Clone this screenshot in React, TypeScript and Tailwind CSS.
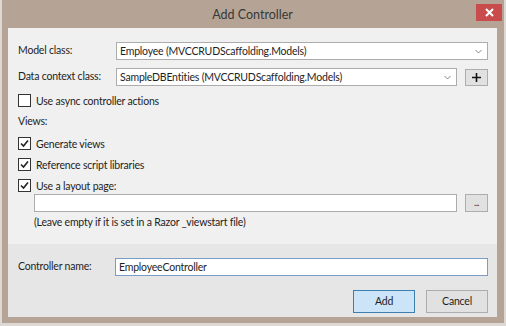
import React from "react";

const font = { fontFamily: 'Lato, "Noto Sans", sans-serif' };

function Chevron() {
  return (
    <svg width="7" height="5" viewBox="0 0 7 5" className="shrink-0">
      <polyline points="0.5,1 3.5,4 6.5,1" fill="none" stroke="#8a8a8a" strokeWidth="1" />
    </svg>
  );
}

function Check({ checked, label }: { checked: boolean; label: string }) {
  return (
    <div className="flex items-center h-[13px]">
      <div className="w-[13px] h-[13px] border border-[#333333] bg-white flex items-center justify-center shrink-0">
        {checked && (
          <svg width="11" height="11" viewBox="0 0 11 11">
            <polyline points="2,5.5 4.5,8 9,2.5" fill="none" stroke="#222" strokeWidth="1.6" />
          </svg>
        )}
      </div>
      <span className="ml-[5px] leading-[16px]">{label}</span>
    </div>
  );
}

export default function App() {
  return (
    <div className="w-[506px] h-[326px] bg-[#ddd8d3] pl-[2px] pr-[2px] pb-[3px] flex" style={font}>
      <div className="flex-1 bg-[#b5a496] flex flex-col pl-[6px] pr-[7px] pb-[6px]">
        <div className="h-[28px] relative flex items-center justify-center">
          <span className="text-[12.5px] text-[#383838] leading-none mt-[2px]">Add Controller</span>
          <div className="absolute right-[-5px] top-[4px] w-[26px] h-[17px] bg-[#c94c4c] flex items-center justify-center">
            <svg width="9" height="9" viewBox="0 0 9 9">
              <path d="M1 1 L8 8 M8 1 L1 8" stroke="white" strokeWidth="2" />
            </svg>
          </div>
        </div>
        <div className="flex-1 bg-[#f0f0f0] flex flex-col text-[10.5px] tracking-[-0.2px] text-[#1e1e1e]">
          <div className="h-[216px] pt-[14px] pl-[10px] pr-[9px] flex flex-col">
            <div className="flex items-center h-[18px]">
              <span className="w-[98px] shrink-0">Model class:</span>
              <div className="flex-1 h-[18px] bg-white border border-[#acacac] flex items-center pl-[3px] pr-[5px]">
                <span className="flex-1 leading-none">Employee (MVCCRUDScaffolding.Models)</span>
                <Chevron />
              </div>
            </div>
            <div className="flex items-center h-[18px] mt-[8px]">
              <span className="w-[98px] shrink-0">Data context class:</span>
              <div className="flex-1 h-[18px] bg-white border border-[#acacac] flex items-center pl-[3px] pr-[5px]">
                <span className="flex-1 leading-none">SampleDBEntities (MVCCRUDScaffolding.Models)</span>
                <Chevron />
              </div>
              <div className="ml-[8px] w-[23px] h-[17px] bg-[#e1e1e1] border border-[#adadad] flex items-center justify-center">
                <svg width="11" height="11" viewBox="0 0 11 11">
                  <path d="M5.5 1 V10 M1 5.5 H10" stroke="#111" strokeWidth="1.6" />
                </svg>
              </div>
            </div>
            <div className="mt-[8px]">
              <Check checked={false} label="Use async controller actions" />
            </div>
            <div className="mt-[6px] h-[16px] leading-[16px]">Views:</div>
            <div className="mt-[8px] flex flex-col gap-[8px]">
              <Check checked label="Generate views" />
              <Check checked label="Reference script libraries" />
              <Check checked label="Use a layout page:" />
            </div>
            <div className="mt-[2px] pl-[16px] flex items-center h-[18px]">
              <div className="flex-1 h-[18px] bg-white border border-[#acacac]" />
              <div className="ml-[8px] w-[23px] h-[18px] bg-[#e1e1e1] border border-[#adadad] flex items-end justify-center pb-[4px]">
                <span className="text-[9px] leading-none tracking-[-0.5px]">...</span>
              </div>
            </div>
            <div className="pl-[16px] mt-[2px] h-[16px] leading-[16px]">
              (Leave empty if it is set in a Razor _viewstart file)
            </div>
          </div>
          <div className="flex-1 bg-[#e6e6e6] pt-[14px] pl-[10px] pr-[9px] flex flex-col">
            <div className="flex items-center h-[18px]">
              <span className="w-[97px] shrink-0">Controller name:</span>
              <div className="flex-1 h-[18px] bg-white border border-[#7a9cc7] flex items-center pl-[3px]">
                <span className="leading-none">EmployeeController</span>
              </div>
            </div>
            <div className="mt-[14px] flex justify-end gap-[11px]">
              <div className="w-[62px] h-[23px] bg-[#cce4f7] border border-[#3c7fb1] flex items-center justify-center">Add</div>
              <div className="w-[62px] h-[23px] bg-[#e1e1e1] border border-[#adadad] flex items-center justify-center">Cancel</div>
            </div>
          </div>
        </div>
      </div>
    </div>
  );
}
